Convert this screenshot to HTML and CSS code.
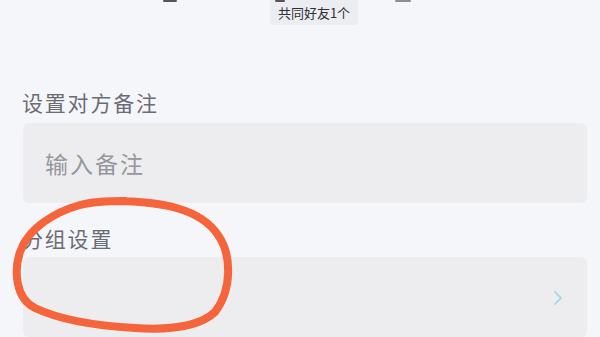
FILE: index.html
```html
<!DOCTYPE html>
<html lang="zh-CN">
<head>
    <meta charset="UTF-8">
    <meta name="viewport" content="width=device-width, initial-scale=1.0">
    <title>设置备注</title>
    <link rel="stylesheet" href="styles.css">
</head>
<body>
    <div class="page">
        <div class="top-edge">
            <span class="frag frag-a"></span>
            <span class="frag frag-b"></span>
            <span class="frag frag-c"></span>
        </div>
        <div class="mutual">
            <span class="mutual-tag">共同好友1个</span>
        </div>

        <div class="field">
            <div class="field-label">设置对方备注</div>
            <div class="field-box">
                <input type="text" class="remark-input" placeholder="输入备注">
            </div>
        </div>

        <div class="field group-field">
            <div class="field-label">分组设置</div>
            <div class="field-box select-box">
                <svg class="chevron" width="10" height="16" viewBox="0 0 10 16">
                    <path d="M2 2 L8 8 L2 14" fill="none" stroke="#a9dcea" stroke-width="2" stroke-linecap="round" stroke-linejoin="round"/>
                </svg>
            </div>
        </div>

        <!-- hand drawn mark over the screenshot -->
        <svg class="circle-mark" width="250" height="147" viewBox="0 0 250 147">
            <path d="M120 11 C 160 12, 200 18, 218 45 C 232 65, 232 100, 215 122 C 198 138, 165 140, 135 138 C 100 136, 60 130, 35 118 C 15 108, 14 80, 20 62 C 28 38, 55 22, 80 15 C 95 11, 110 11, 125 11" fill="none" stroke="#f5643a" stroke-width="8" stroke-linecap="round"/>
        </svg>
    </div>
</body>
</html>
```

FILE: styles.css
```css
html, body {
    margin: 0;
    padding: 0;
    background-color: #f5f6fa;
}
body {
    font-family: "Noto Sans CJK SC", "Noto Sans", sans-serif;
    width: 600px;
    height: 337px;
    overflow: hidden;
}
.page {
    position: relative;
    padding: 0 13px 0 23px;
}
.top-edge {
    height: 3px;
    overflow: hidden;
    position: relative;
}
.frag {
    position: absolute;
    top: 0;
    height: 2px;
    background-color: #55565c;
    border-radius: 1px;
}
.frag-a { left: 140px; width: 14px; }
.frag-b { left: 252px; width: 10px; }
.frag-c { left: 372px; width: 16px; background-color: #8d8e94; }
.mutual {
    display: flex;
    justify-content: center;
    margin-top: -3px;
    padding-left: 18px;
}
.mutual-tag {
    background-color: #ecedf1;
    color: #2f3035;
    font-size: 13px;
    line-height: 25px;
    padding: 0 8px;
    border-radius: 0 0 3px 3px;
}
.field {
    margin-top: 64px;
}
.field-label {
    font-size: 21px;
    color: #6b6c72;
    line-height: 26px;
    margin-left: -1px;
    letter-spacing: 1.8px;
}
.field-box {
    margin-top: 8px;
    height: 80px;
    background-color: #ededef;
    border-radius: 6px;
    display: flex;
    align-items: center;
}
.remark-input {
    border: none;
    background: transparent;
    outline: none;
    width: 100%;
    padding: 0 0 0 22px;
    font-family: inherit;
    font-size: 23px;
    letter-spacing: 2px;
    color: #333;
}
.remark-input::placeholder {
    color: #96979c;
}
.group-field {
    margin-top: 22px;
}
.group-field .field-box {
    margin-top: 6px;
}
.select-box {
    justify-content: flex-end;
    padding-right: 24px;
}
.chevron {
    margin-top: 2px;
}
.circle-mark {
    position: absolute;
    left: 0;
    top: 190px;
}
```
